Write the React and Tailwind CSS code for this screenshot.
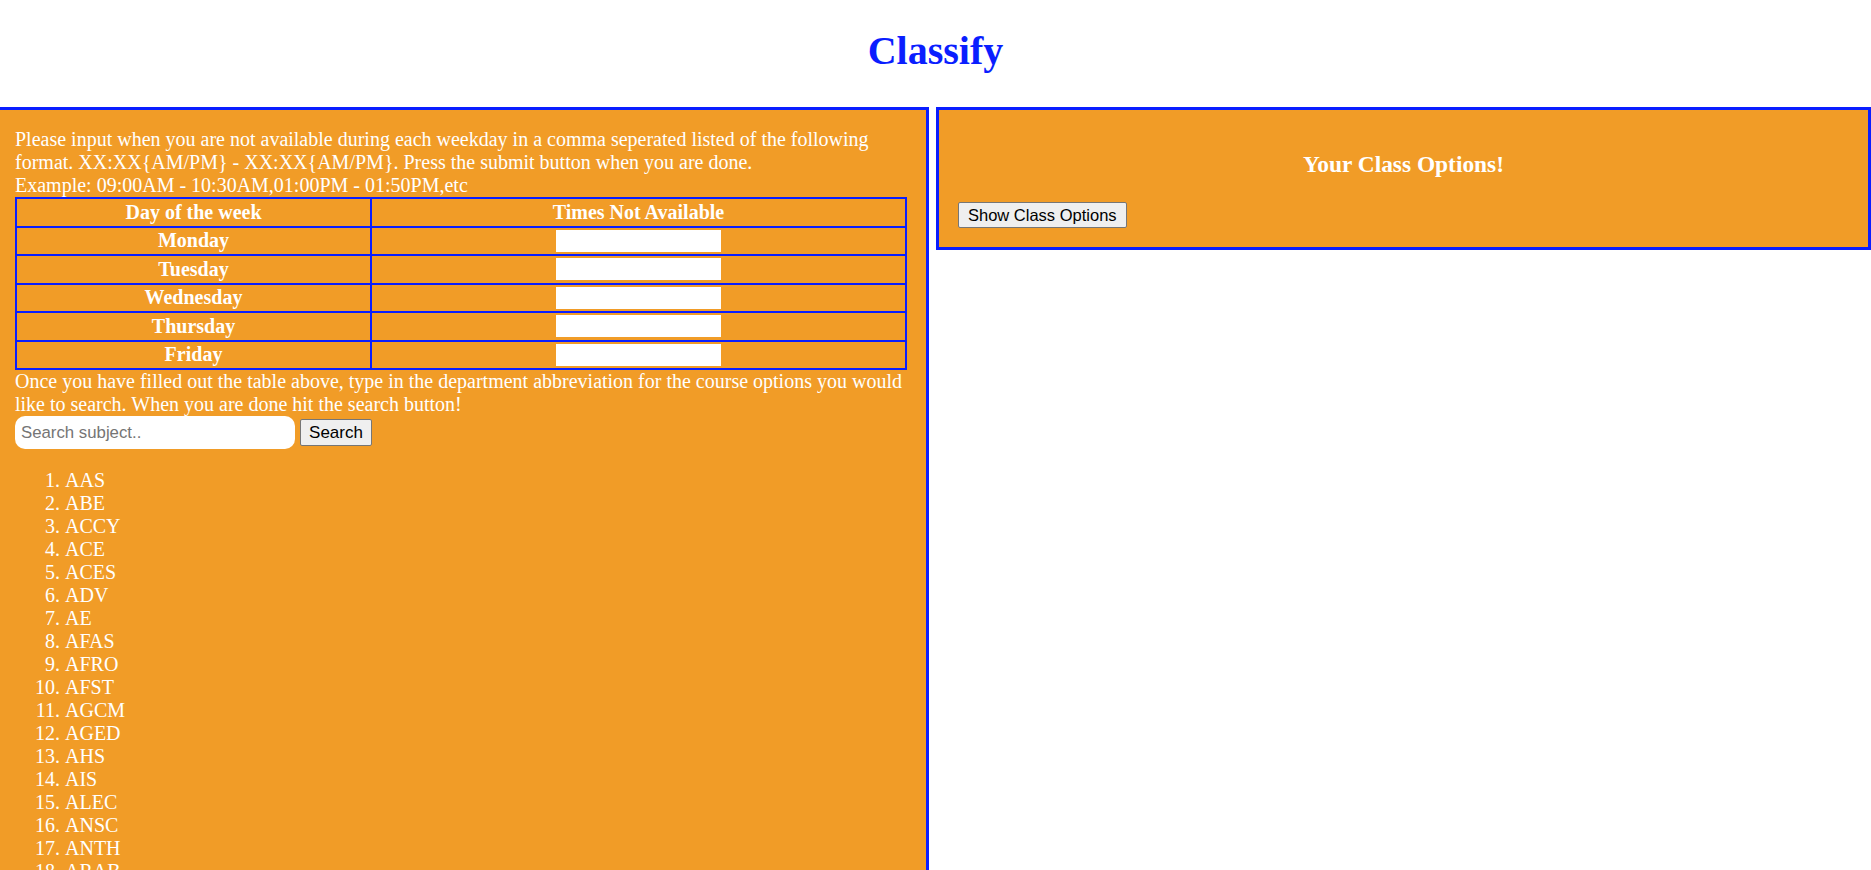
import React from "react";

const days = ["Monday", "Tuesday", "Wednesday", "Thursday", "Friday"];
const subjects = [
  "AAS","ABE","ACCY","ACE","ACES","ADV","AE","AFAS","AFRO","AFST","AGCM","AGED","AHS","AIS","ALEC","ANSC","ANTH","ARAB","ARCH","ART","ARTD","ARTE","ARTF","ARTH",
];

export default function App() {
  return (
    <div className="w-full h-[870px] overflow-hidden bg-white text-white font-['Liberation_Serif',serif]">
      <div className="h-[107px] pt-[28px] text-center">
        <h1 className="text-[40px] leading-[46px] font-bold text-[#0a1eff]">Classify</h1>
      </div>
      <div className="flex items-start gap-[7px]">
        <div className="w-[929px] shrink-0 bg-[#f19c27] border-t-[3px] border-r-[3px] border-[#0a1eff] pt-[18px] pl-[15px] pb-[40px] text-[20px] leading-[23px]">
          <div>
            <div className="whitespace-nowrap">Please input when you are not available during each weekday in a comma seperated listed of the following</div>
            <div className="whitespace-nowrap">format. XX:XX{"{"}AM/PM{"}"} - XX:XX{"{"}AM/PM{"}"}. Press the submit button when you are done.</div>
            <div className="whitespace-nowrap">Example: 09:00AM - 10:30AM,01:00PM - 01:50PM,etc</div>
          </div>
          <table className="w-[892px] border-collapse border-2 border-[#0a1eff]">
            <tbody>
              <tr className="h-[28.5px]">
                <th className="w-[355px] border-2 border-[#0a1eff] p-0 text-center font-bold">Day of the week</th>
                <th className="border-2 border-[#0a1eff] p-0 text-center font-bold">Times Not Available</th>
              </tr>
              {days.map((d) => (
                <tr key={d} className="h-[28.5px]">
                  <td className="border-2 border-[#0a1eff] p-0 text-center font-bold">{d}</td>
                  <td className="border-2 border-[#0a1eff] p-0 text-center">
                    <div className="flex justify-center">
                      <input type="text" className="w-[165px] h-[22px] bg-white border-0 outline-none" />
                    </div>
                  </td>
                </tr>
              ))}
            </tbody>
          </table>
          <div>
            <div className="whitespace-nowrap">Once you have filled out the table above, type in the department abbreviation for the course options you would</div>
            <div className="whitespace-nowrap">like to search. When you are done hit the search button!</div>
          </div>
          <div className="flex items-center gap-[5px]">
            <input
              type="text"
              placeholder="Search subject.."
              className="w-[280px] h-[33px] rounded-[10px] bg-white px-[6px] text-[16.8px] text-black placeholder:text-[#757575] font-['Liberation_Sans',Arial,sans-serif] outline-none"
            />
            <button className="w-[72px] h-[27px] bg-[#efefef] border border-[#767676] rounded-[2px] text-[17px] leading-none text-black font-['Liberation_Sans',Arial,sans-serif]">
              Search
            </button>
          </div>
          <ol className="list-decimal mt-[20px] pl-[50px]">
            {subjects.map((s) => (
              <li key={s}>{s}</li>
            ))}
          </ol>
        </div>
        <div className="w-[935px] shrink-0 bg-[#f19c27] border-[3px] border-[#0a1eff] pt-[41px] px-[19px] pb-[19px]">
          <h3 className="text-[23.4px] leading-[27px] font-bold text-center">Your Class Options!</h3>
          <button className="mt-[24px] h-[26px] px-[9px] bg-[#efefef] border border-[#767676] rounded-[2px] text-[16.5px] leading-none text-black font-['Liberation_Sans',Arial,sans-serif]">
            Show Class Options
          </button>
        </div>
      </div>
    </div>
  );
}
